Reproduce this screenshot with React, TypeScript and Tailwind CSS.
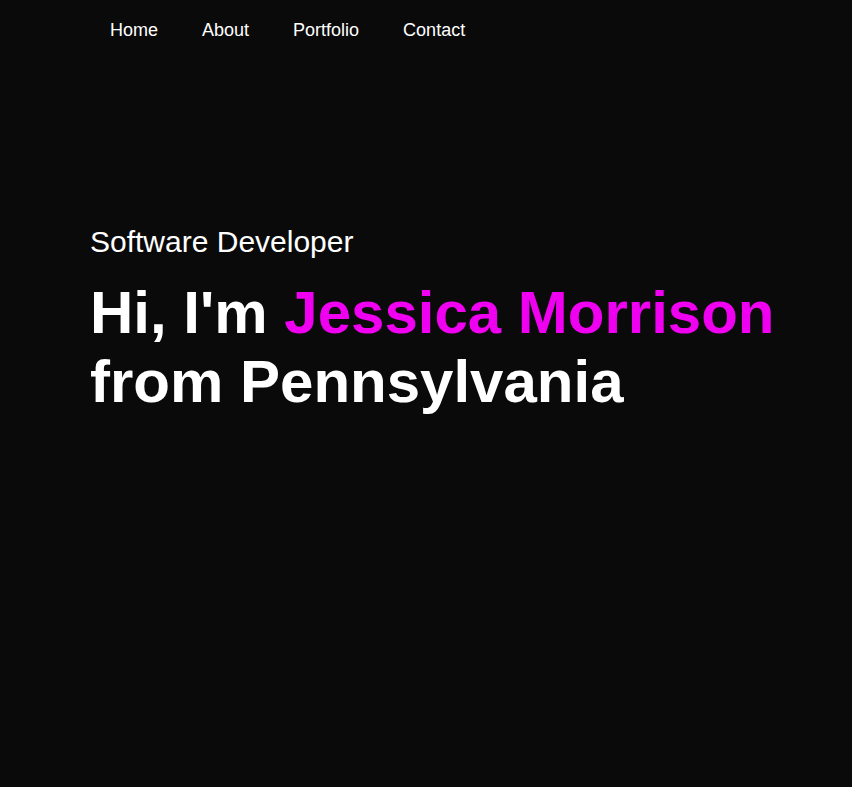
const links = ["Home", "About", "Portfolio", "Contact"];

export default function App() {
  return (
    <main
      className="min-h-screen bg-[#0a0a0a] text-white"
      style={{ fontFamily: '"Liberation Sans", Arial, sans-serif' }}
    >
      <nav className="flex h-[60px] items-center pl-[88px]">
        {links.map((l) => (
          <a key={l} href="#" className="px-[22px] text-[18px] leading-[normal] text-white">
            {l}
          </a>
        ))}
      </nav>

      <section className="pl-[90px] pt-[165px]">
        <p className="text-[30px] leading-[normal]">Software Developer</p>
        <h1 className="mt-[19px] text-[60px] font-bold leading-[normal]">
          Hi, I'm <span className="text-[#f000f0]">Jessica Morrison</span>
          <br />
          from Pennsylvania
        </h1>
      </section>
    </main>
  );
}
